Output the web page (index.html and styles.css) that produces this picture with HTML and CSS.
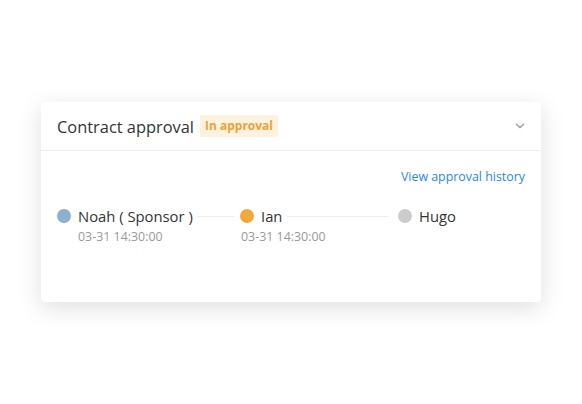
FILE: index.html
```html
<!DOCTYPE html>
<html lang="en">
<head>
    <meta charset="UTF-8">
    <meta name="viewport" content="width=device-width, initial-scale=1.0">
    <title>Contract approval</title>
    <link rel="stylesheet" href="styles.css">
</head>
<body>
    <div class="approval-card">
        <div class="card-header">
            <span class="card-title">Contract approval</span>
            <span class="status-badge">In approval</span>
            <svg class="chevron" width="10" height="6" viewBox="0 0 10 6">
                <path d="M1 1 L5 4.5 L9 1" fill="none" stroke="#a0a0a0" stroke-width="1.6"/>
            </svg>
        </div>
        <div class="card-body">
            <div class="history-row">
                <a class="history-link" href="#">View approval history</a>
            </div>
            <div class="steps">
                <div class="step step-first">
                    <div class="step-head">
                        <span class="dot dot-done"></span>
                        <span class="step-name">Noah ( Sponsor )</span>
                        <span class="step-line"></span>
                    </div>
                    <div class="step-time time-indent">03-31 14:30:00</div>
                </div>
                <div class="step step-second">
                    <div class="step-head">
                        <span class="dot dot-active"></span>
                        <span class="step-name">Ian</span>
                        <span class="step-line line-wide"></span>
                    </div>
                    <div class="step-time">03-31 14:30:00</div>
                </div>
                <div class="step step-last">
                    <div class="step-head">
                        <span class="dot dot-wait"></span>
                        <span class="step-name">Hugo</span>
                    </div>
                </div>
            </div>
        </div>
    </div>
</body>
</html>
```

FILE: styles.css
```css
body {
    font-family: "Open Sans", "Noto Sans", Arial, sans-serif;
    margin: 0;
    padding: 102px 41px;
    background-color: #fff;
}
.approval-card {
    width: 500px;
    height: 200px;
    background: #fff;
    border-radius: 4px;
    box-shadow: 0 6px 24px rgba(0, 0, 0, 0.13);
    box-sizing: border-box;
}
.card-header {
    height: 49px;
    border-bottom: 1px solid #eeeeee;
    box-sizing: border-box;
    display: flex;
    align-items: center;
    padding: 0 16px;
}
.card-title {
    font-size: 16.4px;
    color: #333;
}
.status-badge {
    margin-left: 6px;
    height: 22px;
    line-height: 22px;
    padding: 0 5px;
    border-radius: 2px;
    background-color: #fdf2e0;
    color: #f0a236;
    font-size: 12px;
    font-weight: bold;
}
.chevron {
    margin-left: auto;
}
.card-body {
    padding: 16px 16px 0;
}
.history-row {
    display: flex;
    justify-content: flex-end;
}
.history-link {
    font-size: 12.4px;
    color: #2b85f0;
    text-decoration: none;
    line-height: 20px;
}
.steps {
    display: flex;
    margin-top: 19px;
}
.step-first {
    width: 183px;
}
.step-second {
    width: 158px;
}
.step-head {
    display: flex;
    align-items: center;
    height: 20px;
}
.dot {
    width: 14px;
    height: 14px;
    border-radius: 50%;
    flex: none;
}
.dot-done {
    background-color: #8cb0cf;
}
.dot-active {
    background-color: #f0a93b;
}
.dot-wait {
    background-color: #cccccc;
}
.step-name {
    margin-left: 7px;
    font-size: 14.8px;
    color: #333;
    white-space: nowrap;
}
.step-line {
    flex: 1;
    height: 1px;
    background-color: #eeeeee;
    margin: 0 5px;
}
.line-wide {
    margin-right: 10px;
}
.step-time {
    margin-top: 2px;
    font-size: 12.4px;
    color: #999;
    padding-left: 1px;
}
.time-indent {
    padding-left: 21px;
}
```
